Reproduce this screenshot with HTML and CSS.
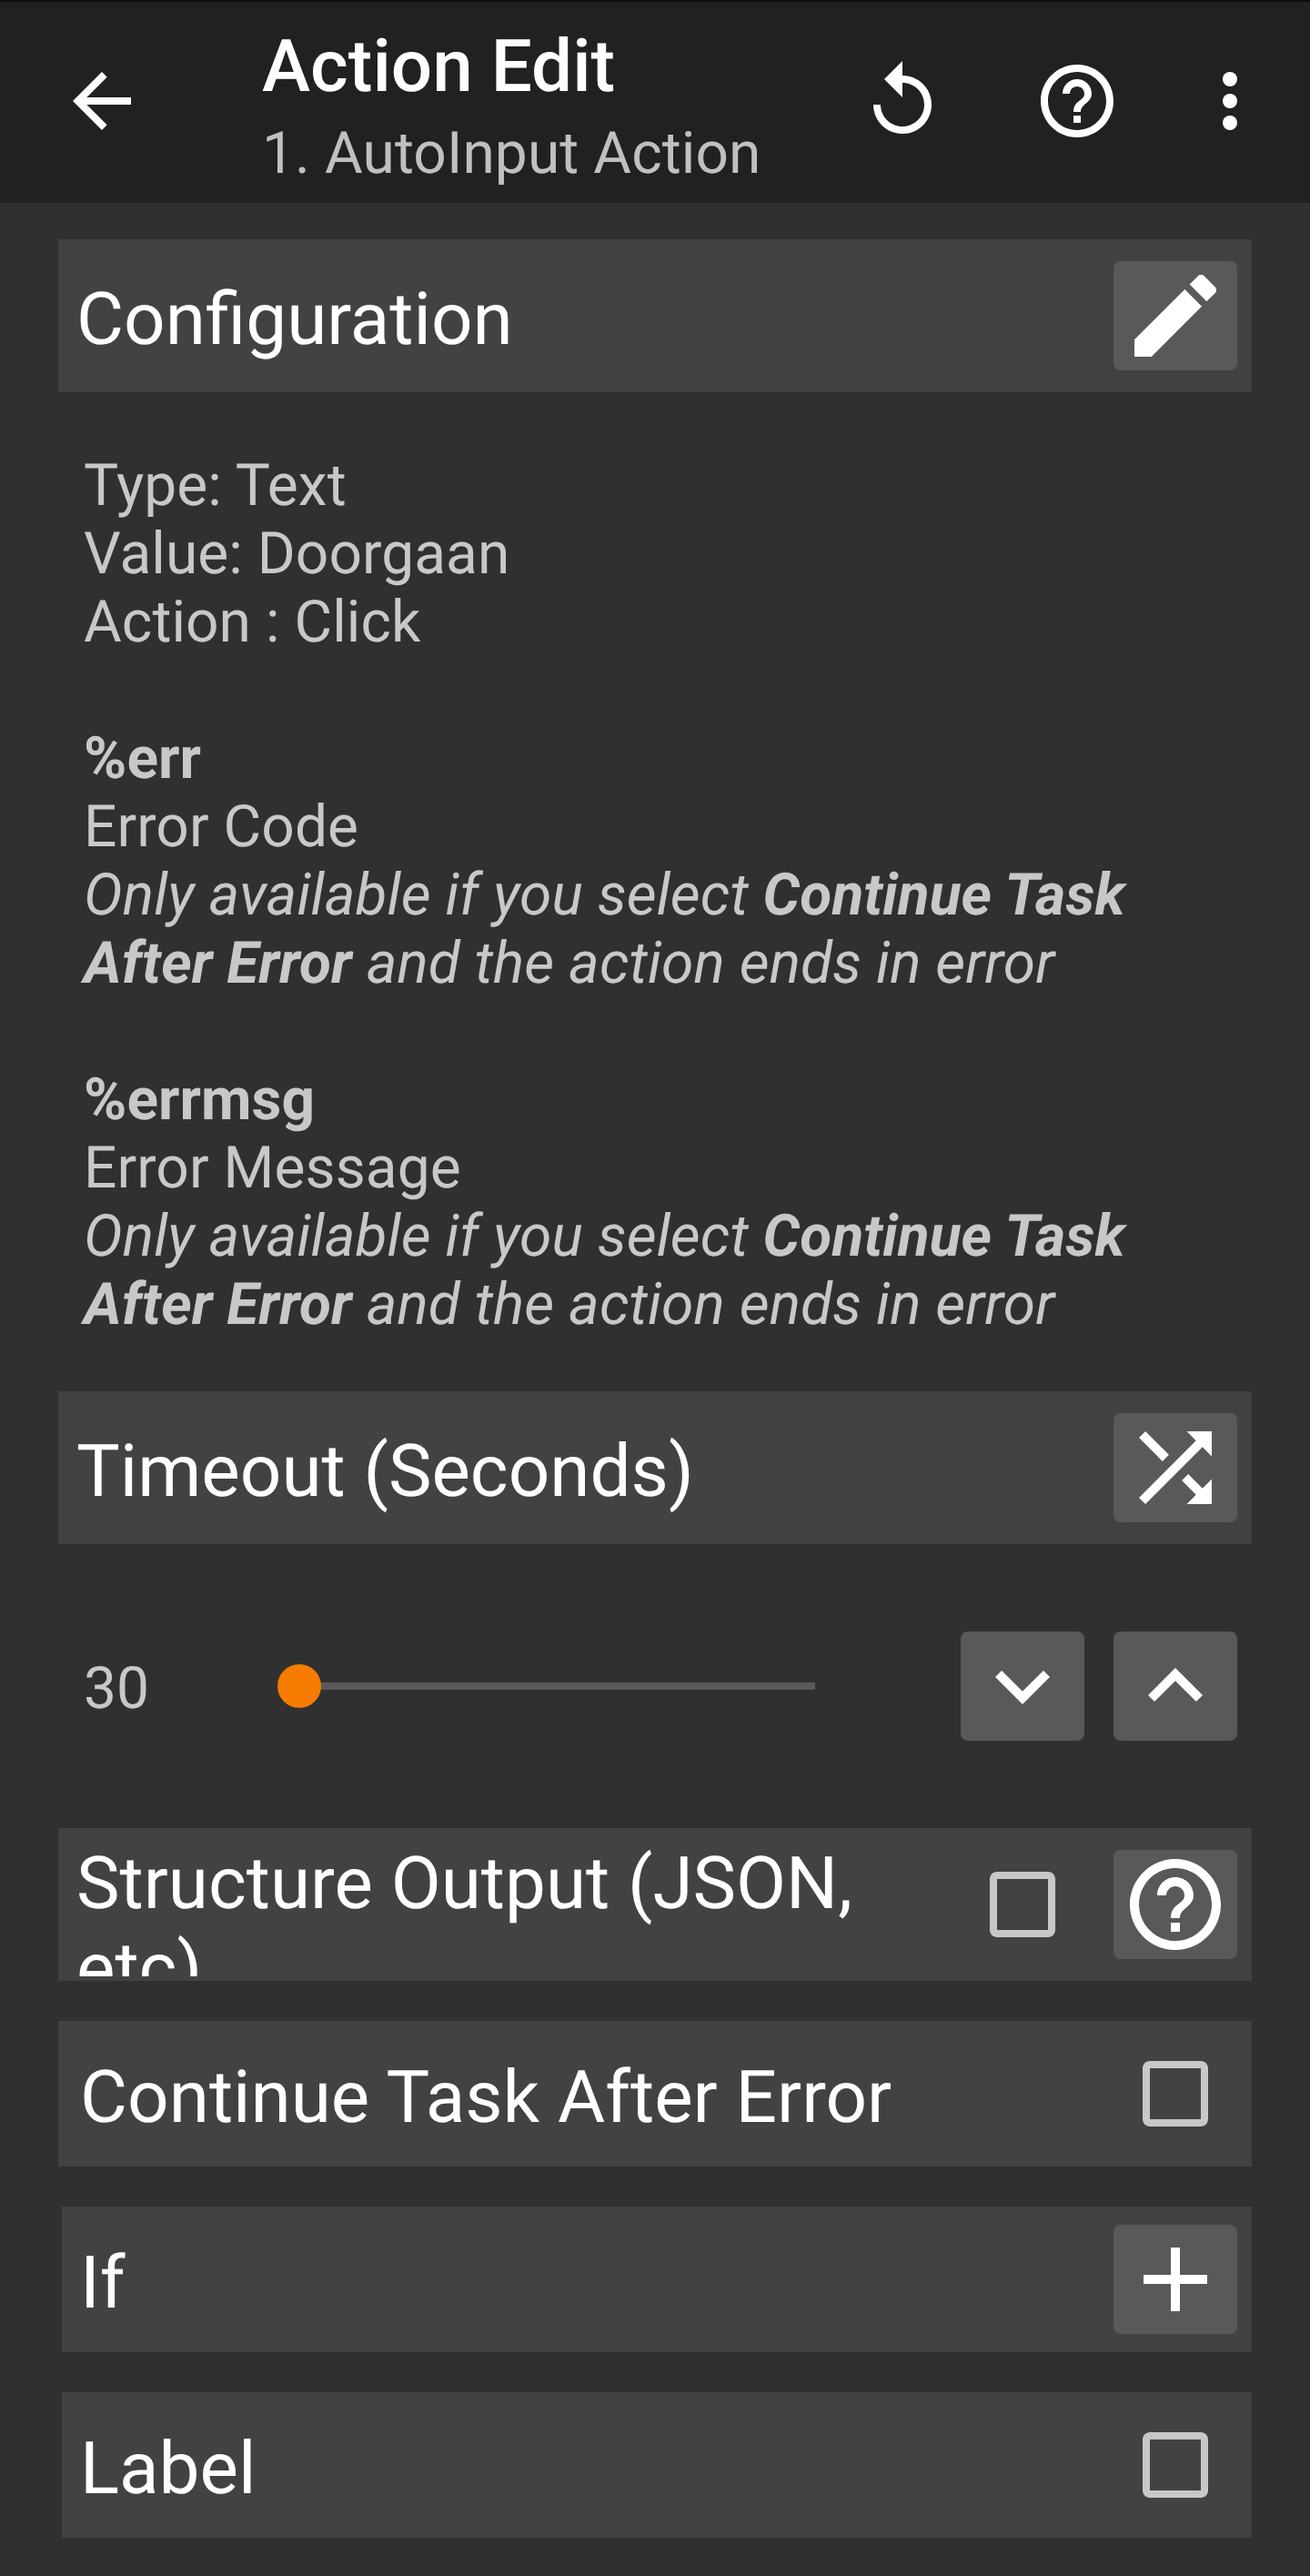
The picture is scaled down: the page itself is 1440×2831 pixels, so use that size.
FILE: index.html
```html
<!DOCTYPE html>
<html lang="en">
<head>
<meta charset="utf-8">
<title>Action Edit</title>
<link rel="stylesheet" href="styles.css">
</head>
<body>
<header class="toolbar">
  <svg class="icon nav-icon" viewBox="0 0 24 24"><path d="M20 11H7.83l5.59-5.59L12 4l-8 8 8 8 1.41-1.41L7.83 13H20v-2z"/></svg>
  <div class="titles">
    <div class="title">Action Edit</div>
    <div class="subtitle">1. AutoInput Action</div>
  </div>
  <svg class="icon act-replay" viewBox="0 0 24 24"><path d="M12 5V1L7 6l5 5V7c3.31 0 6 2.69 6 6s-2.69 6-6 6-6-2.69-6-6H4c0 4.42 3.58 8 8 8s8-3.58 8-8-3.58-8-8-8z"/></svg>
  <svg class="icon act-help" viewBox="0 0 24 24"><path d="M11 18h2v-2h-2v2zm1-16C6.48 2 2 6.48 2 12s4.48 10 10 10 10-4.48 10-10S17.52 2 12 2zm0 18c-4.41 0-8-3.59-8-8s3.59-8 8-8 8 3.59 8 8-3.59 8-8 8zm0-14c-2.21 0-4 1.79-4 4h2c0-1.1.9-2 2-2s2 .9 2 2c0 2-3 1.75-3 5h2c0-2.25 3-2.5 3-5 0-2.21-1.79-4-4-4z"/></svg>
  <svg class="icon act-more" viewBox="0 0 24 24"><circle cx="12" cy="6" r="2"/><circle cx="12" cy="12" r="2"/><circle cx="12" cy="18" r="2"/></svg>
</header>
<main class="content">
  <section class="bar bar-first">
    <div class="label">Configuration</div>
    <div class="btn"><svg class="btn-icon" viewBox="0 0 24 24"><path d="M3 17.25V21h3.75L17.81 9.94l-3.75-3.75L3 17.25zM20.71 7.04c.39-.39.39-1.02 0-1.41l-2.34-2.34c-.39-.39-1.02-.39-1.41 0l-1.83 1.83 3.75 3.75 1.83-1.83z"/></svg></div>
  </section>
  <div class="desc">Type: Text<br>Value: Doorgaan<br>Action : Click<br><br><b>%err</b><br>Error Code<br><i>Only available if you select <b>Continue Task After Error</b> and the action ends in error</i><br><br><b>%errmsg</b><br>Error Message<br><i>Only available if you select <b>Continue Task After Error</b> and the action ends in error</i></div>
  <section class="bar">
    <div class="label">Timeout (Seconds)</div>
    <div class="btn"><svg class="btn-icon" viewBox="0 0 24 24"><path d="M10.59 9.17L5.41 4 4 5.41l5.17 5.17 1.42-1.41zM14.5 4l2.04 2.04L4 18.59 5.41 20 17.96 7.46 20 9.5V4h-5.5zm.33 9.41l-1.41 1.41 3.13 3.13L14.5 20H20v-5.5l-2.04 2.04-3.13-3.13z"/></svg></div>
  </section>
  <div class="slider-row">
    <div class="value">30</div>
    <div class="slider"><div class="thumb"></div></div>
    <div class="btn btn-push"><svg class="btn-icon" viewBox="0 0 24 24"><path d="M7.41 8.59L12 13.17l4.59-4.58L18 10l-6 6-6-6 1.41-1.41z"/></svg></div>
    <div class="btn"><svg class="btn-icon" viewBox="0 0 24 24"><path d="M7.41 15.41L12 10.83l4.59 4.58L18 14l-6-6-6 6z"/></svg></div>
  </div>
  <section class="bar bar-clip">
    <div class="label label-wrap">Structure Output (JSON, etc)</div>
    <div class="check-slot"><svg class="check" viewBox="0 0 24 24"><path d="M19 5v14H5V5h14m0-2H5c-1.1 0-2 .9-2 2v14c0 1.1.9 2 2 2h14c1.1 0 2-.9 2-2V5c0-1.1-.9-2-2-2z"/></svg></div>
    <div class="btn"><svg class="btn-icon" viewBox="0 0 24 24"><path d="M11 18h2v-2h-2v2zm1-16C6.48 2 2 6.48 2 12s4.48 10 10 10 10-4.48 10-10S17.52 2 12 2zm0 18c-4.41 0-8-3.59-8-8s3.59-8 8-8 8 3.59 8 8-3.59 8-8 8zm0-14c-2.21 0-4 1.79-4 4h2c0-1.1.9-2 2-2s2 .9 2 2c0 2-3 1.75-3 5h2c0-2.25 3-2.5 3-5 0-2.21-1.79-4-4-4z"/></svg></div>
  </section>
  <section class="bar option option-wide">
    <div class="label">Continue Task After Error</div>
    <div class="check-slot"><svg class="check" viewBox="0 0 24 24"><path d="M19 5v14H5V5h14m0-2H5c-1.1 0-2 .9-2 2v14c0 1.1.9 2 2 2h14c1.1 0 2-.9 2-2V5c0-1.1-.9-2-2-2z"/></svg></div>
  </section>
  <section class="bar option">
    <div class="label">If</div>
    <div class="btn"><svg class="btn-icon" viewBox="0 0 24 24"><path d="M19 13h-6v6h-2v-6H5v-2h6V5h2v6h6v2z"/></svg></div>
  </section>
  <section class="bar option">
    <div class="label">Label</div>
    <div class="check-slot"><svg class="check" viewBox="0 0 24 24"><path d="M19 5v14H5V5h14m0-2H5c-1.1 0-2 .9-2 2v14c0 1.1.9 2 2 2h14c1.1 0 2-.9 2-2V5c0-1.1-.9-2-2-2z"/></svg></div>
  </section>
</main>
</body>
</html>
```
FILE: styles.css
```css
* { box-sizing: border-box; }
html, body { margin: 0; padding: 0; }
body {
  width: 1440px;
  height: 2831px;
  overflow: hidden;
  background: #303030;
  font-family: Roboto, "Noto Sans", sans-serif;
  color: #fff;
  text-rendering: geometricPrecision;
}
.toolbar {
  display: flex;
  height: 223px;
  padding: 24px 40px 0 64px;
  border-top: 2px solid #0d0d0d;
  background: #212121;
}
.icon { width: 96px; height: 96px; fill: #fff; flex: none; margin-top: 37px; }
.titles { width: 656px; margin-left: 128px; flex: none; }
.title { font-size: 80px; line-height: 94px; font-weight: 500; }
.subtitle { font-size: 64px; line-height: 75px; margin-top: 11px; color: #c0c0c0; letter-spacing: 0.1px; }
.act-help { margin-left: 96px; }
.act-more { margin-left: 72px; }
.content { padding: 40px 64px 0; }
.bar {
  display: flex;
  align-items: center;
  height: 168px;
  padding: 0 16px 0 20px;
  background: #424242;
}
.label { flex: 1; min-width: 0; font-size: 80px; line-height: 94px; padding-top: 8px; }
.btn {
  display: flex;
  width: 136px;
  height: 120px;
  justify-content: center;
  flex: none;
  border-radius: 8px;
  background: #59595b;
}
.btn-icon { width: 120px; height: 120px; fill: #fff; display: block; }
.btn-push { margin-left: auto; }
.check-slot { display: flex; justify-content: center; width: 136px; flex: none; }
.check { width: 96px; height: 96px; fill: #c8c8c8; display: block; }
.desc {
  width: 1284px;
  margin: 65px 0 58px;
  padding: 0 28px;
  font-size: 64px;
  line-height: 75px;
  letter-spacing: 0.07px;
  color: #c8c8c8;
}
.slider-row {
  display: flex;
  align-items: center;
  gap: 32px;
  height: 120px;
  margin: 96px 0;
  padding: 0 16px 0 28px;
}
.value { width: 181px; font-size: 64px; line-height: 75px; padding-top: 4px; color: #c8c8c8; }
.slider { position: relative; width: 567px; height: 8px; margin-left: 24px; background: #595959; }
.thumb {
  position: absolute;
  left: -24px;
  top: -20px;
  width: 48px;
  height: 48px;
  border-radius: 50%;
  background: #f57c00;
}
.bar-clip { align-items: flex-start; padding-top: 24px; margin-bottom: 44px; }
.bar-clip .label { padding-top: 0; margin-top: -10px; }
.label-wrap { height: 149px; overflow: hidden; }
.bar-clip .check-slot { margin-top: 12px; margin-right: 32px; }
.option { height: 160px; margin-bottom: 44px; margin-left: 4px; padding-left: 20px; }
.option-wide { margin-left: 0; padding-left: 24px; }
```
